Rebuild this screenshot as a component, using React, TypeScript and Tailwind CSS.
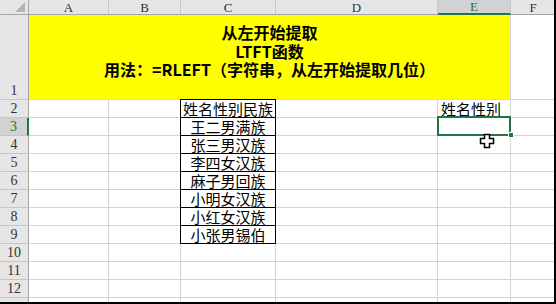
import React from "react";

const cols = ["A", "B", "C", "D", "E", "F"];
const people = [
  "姓名性别民族",
  "王二男满族",
  "张三男汉族",
  "李四女汉族",
  "麻子男回族",
  "小明女汉族",
  "小红女汉族",
  "小张男锡伯",
];
const rows = [2, 3, 4, 5, 6, 7, 8, 9, 10, 11, 12, 13];

const cjk = { fontFamily: '"Noto Sans CJK SC", "Liberation Sans", sans-serif' };
const head = { fontFamily: '"Liberation Serif", "Noto Sans CJK SC", serif' };

function RowHead({ n }: { n: number }) {
  const active = n === 3;
  return (
    <div
      style={head}
      className={
        active
          ? "flex items-end justify-center border-b border-r-2 border-b-[#c6c6c6] border-r-[#217346] bg-[#d2d2d2] pb-[1px] text-[14px] leading-[15px] text-[#217346]"
          : "flex items-end justify-center border-b border-r border-b-[#c6c6c6] border-r-[#a5a5a5] bg-[#e6e6e6] pb-[1px] text-[14px] leading-[15px] text-[#333]"
      }
    >
      {n < 13 ? n : null}
    </div>
  );
}

function Cell({ r, c }: { r: number; c: string }) {
  if (c === "C" && r >= 2 && r <= 9) {
    return (
      <div
        style={cjk}
        className={
          r === 2
            ? "flex items-center justify-center whitespace-nowrap border-b border-r border-black pt-[1px] text-[15px] leading-[16px] text-black shadow-[-1px_0_0_#000,0_-1px_0_#000,-1px_-1px_0_#000]"
            : "flex items-center justify-center whitespace-nowrap border-b border-r border-black pt-[1px] text-[15px] leading-[16px] text-black shadow-[-1px_0_0_#000]"
        }
      >
        {people[r - 2]}
      </div>
    );
  }
  if (c === "E" && r === 2) {
    return (
      <div
        style={cjk}
        className="flex items-center whitespace-nowrap border-b border-r border-[#d4d4d4] pl-[3px] pt-[1px] text-[15px] leading-[16px] text-black"
      >
        姓名性别
      </div>
    );
  }
  return <div className="border-b border-r border-[#d4d4d4]" />;
}

export default function App() {
  return (
    <div className="relative h-[304px] w-[556px] overflow-hidden border-b-2 border-r-2 border-black bg-white">
      <div className="grid grid-cols-[29px_80px_72px_95px_162px_73px_45px] grid-rows-[15px_85px_repeat(12,18px)]">
        {/* corner */}
        <div className="flex items-start justify-end border-b border-r border-[#a5a5a5] bg-[#e6e6e6] pr-[3px] pt-[2px]">
          <svg width="10" height="10" viewBox="0 0 10 10">
            <polygon points="10,0 10,10 0,10" fill="#b4b4b4" />
          </svg>
        </div>
        {cols.map((c) => (
          <div
            key={c}
            style={head}
            className={
              c === "E"
                ? "flex items-center justify-center border-b-2 border-r border-b-[#217346] border-r-[#c6c6c6] bg-[#d2d2d2] text-[13px] leading-[13px] text-[#217346]"
                : "flex items-center justify-center border-b border-r border-b-[#a5a5a5] border-r-[#c6c6c6] bg-[#e6e6e6] text-[13px] leading-[13px] text-[#333]"
            }
          >
            {c}
          </div>
        ))}

        {/* row 1 */}
        <RowHead n={1} />
        <div
          style={cjk}
          className="col-span-5 flex flex-col items-center gap-[2px] border-b border-r border-[#d4d4d4] bg-[#ffff00] pt-[9px] text-[16px] font-bold leading-[16.5px] text-black"
        >
          <span>从左开始提取</span>
          <span>LTFT函数</span>
          <span>用法：=RLEFT（字符串，从左开始提取几位）</span>
        </div>
        <div className="border-b border-r border-[#d4d4d4]" />

        {rows.map((r) => (
          <React.Fragment key={r}>
            <RowHead n={r} />
            {cols.map((c) => (
              <Cell key={c} r={r} c={c} />
            ))}
          </React.Fragment>
        ))}
      </div>

      {/* selection on E3 */}
      <div className="absolute left-[437px] top-[116px] h-[20px] w-[74px] border-2 border-[#217346]" />
      <div className="absolute left-[508px] top-[132px] h-[6px] w-[6px] border border-white bg-[#217346]" />

      {/* cursor */}
      <svg className="absolute left-[479px] top-[133px]" width="16" height="16" viewBox="0 0 16 16">
        <polygon
          points="5.5,1.5 10.5,1.5 10.5,5.5 14.5,5.5 14.5,10.5 10.5,10.5 10.5,14.5 5.5,14.5 5.5,10.5 1.5,10.5 1.5,5.5 5.5,5.5"
          fill="#fff"
          stroke="#000"
          strokeWidth="1.5"
        />
      </svg>
    </div>
  );
}
